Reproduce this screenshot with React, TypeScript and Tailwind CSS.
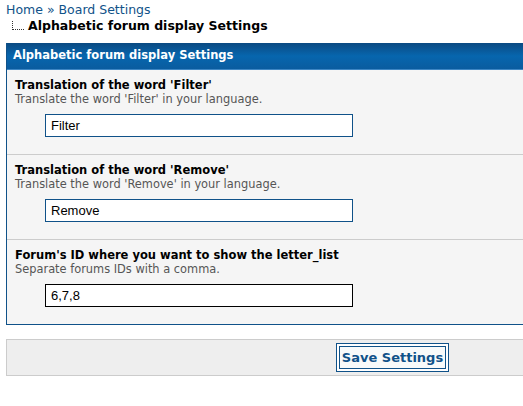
const verdana = { fontFamily: '"DejaVu Sans", Verdana, sans-serif' };

function Section({
  title,
  desc,
  value,
  dark,
  last,
}: {
  title: string;
  desc: string;
  value: string;
  dark?: boolean;
  last?: boolean;
}) {
  return (
    <div className={`pl-[8px] pt-[8px] pb-[17px] ${last ? '' : 'border-b border-[#cccccc]'}`}>
      <div className="text-[11.5px] font-bold leading-[14px] text-black">{title}</div>
      <div className="text-[11.4px] leading-[14px] text-[#555555]">{desc}</div>
      <div className="mt-[8px] pl-[30px]">
        <div
          className={`w-[308px] h-[23px] bg-white border flex items-center px-[5px] text-[13px] text-black ${
            dark ? 'border-black' : 'border-[#105289] border-[1.5px]'
          }`}
          style={{ fontFamily: '"Liberation Sans", Arial, sans-serif' }}
        >
          {value}
        </div>
      </div>
    </div>
  );
}

export default function App() {
  return (
    <div className="w-[523px] h-[406px] bg-white overflow-hidden" style={verdana}>
      {/* Breadcrumb */}
      <div className="pl-[6px] pt-[2px]">
        <div className="text-[12.5px] leading-[16px] text-[#105289]">
          Home <span>»</span> Board Settings
        </div>
        <div className="flex items-end h-[16px]">
          <div className="ml-[6px] mr-[4px] mb-[4px] w-[12px] h-[9px] border-l border-b border-dotted border-[#333333]" />
          <span className="text-[12.5px] font-bold leading-[16px] text-black">
            Alphabetic forum display Settings
          </span>
        </div>
      </div>

      {/* Settings panel */}
      <div className="ml-[6px] mt-[9px] border-l border-b border-[#105289] bg-[#f5f5f5]">
        <div className="h-[27px] flex items-center pl-[6px] text-[11.5px] font-bold text-white bg-gradient-to-b from-[#0a4a82] via-[#0766ae] to-[#0a5c9f] border-b border-[#3d86c4]">
          Alphabetic forum display Settings
        </div>
        <Section
          title="Translation of the word 'Filter'"
          desc="Translate the word 'Filter' in your language."
          value="Filter"
        />
        <Section
          title="Translation of the word 'Remove'"
          desc="Translate the word 'Remove' in your language."
          value="Remove"
        />
        <Section
          title="Forum's ID where you want to show the letter_list"
          desc="Separate forums IDs with a comma."
          value="6,7,8"
          dark
          last
        />
      </div>

      {/* Footer */}
      <div className="ml-[6px] mt-[14px] h-[37px] border-l border-y border-[#cccccc] bg-[#eeeeee] pt-[3px] pl-[329px]">
        <button className="h-[29px] w-[113px] border border-[#105289] p-[2px] bg-white">
          <span className="flex items-center justify-center w-full h-full border border-[#105289] bg-[#f8fafa] text-[13px] font-bold text-[#105289]">
            Save Settings
          </span>
        </button>
      </div>
    </div>
  );
}
